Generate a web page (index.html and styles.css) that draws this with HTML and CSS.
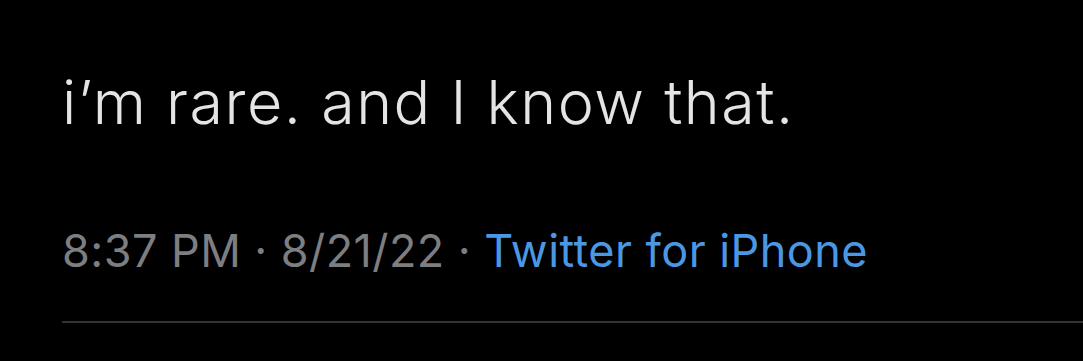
FILE: index.html
```html
<!DOCTYPE html>
<html lang="en">
<head>
    <meta charset="UTF-8">
    <meta name="viewport" content="width=device-width, initial-scale=1.0">
    <title>Tweet</title>
    <link rel="stylesheet" href="styles.css">
</head>
<body>
    <div class="tweet">
        <p class="tweet-text">i’m rare. and I know that.</p>
        <div class="tweet-meta">
            <span>8:37 PM</span>
            <span class="dot">·</span>
            <span>8/21/22</span>
            <span class="dot">·</span>
            <a class="source" href="#">Twitter for iPhone</a>
        </div>
        <div class="divider"></div>
    </div>
</body>
</html>
```

FILE: styles.css
```css
body {
    margin: 0;
    padding: 0;
    background-color: #000;
    font-family: Inter, "Noto Sans", sans-serif;
    overflow: hidden;
}

.tweet {
    padding: 64px 0 0 62px;
}

.tweet-text {
    margin: 0;
    color: #e4e4e4;
    font-size: 61px;
    font-weight: 300;
    letter-spacing: 1.5px;
    line-height: 76px;
}

.tweet-meta {
    margin-top: 83px;
    display: flex;
    align-items: baseline;
    gap: 13px;
    color: #7c7e82;
    font-size: 45px;
    letter-spacing: 0.45px;
    line-height: 56px;
}

.source {
    color: #4a98e4;
    text-decoration: none;
}

.divider {
    margin-top: 42px;
    height: 2px;
    background: #333335;
}
```
